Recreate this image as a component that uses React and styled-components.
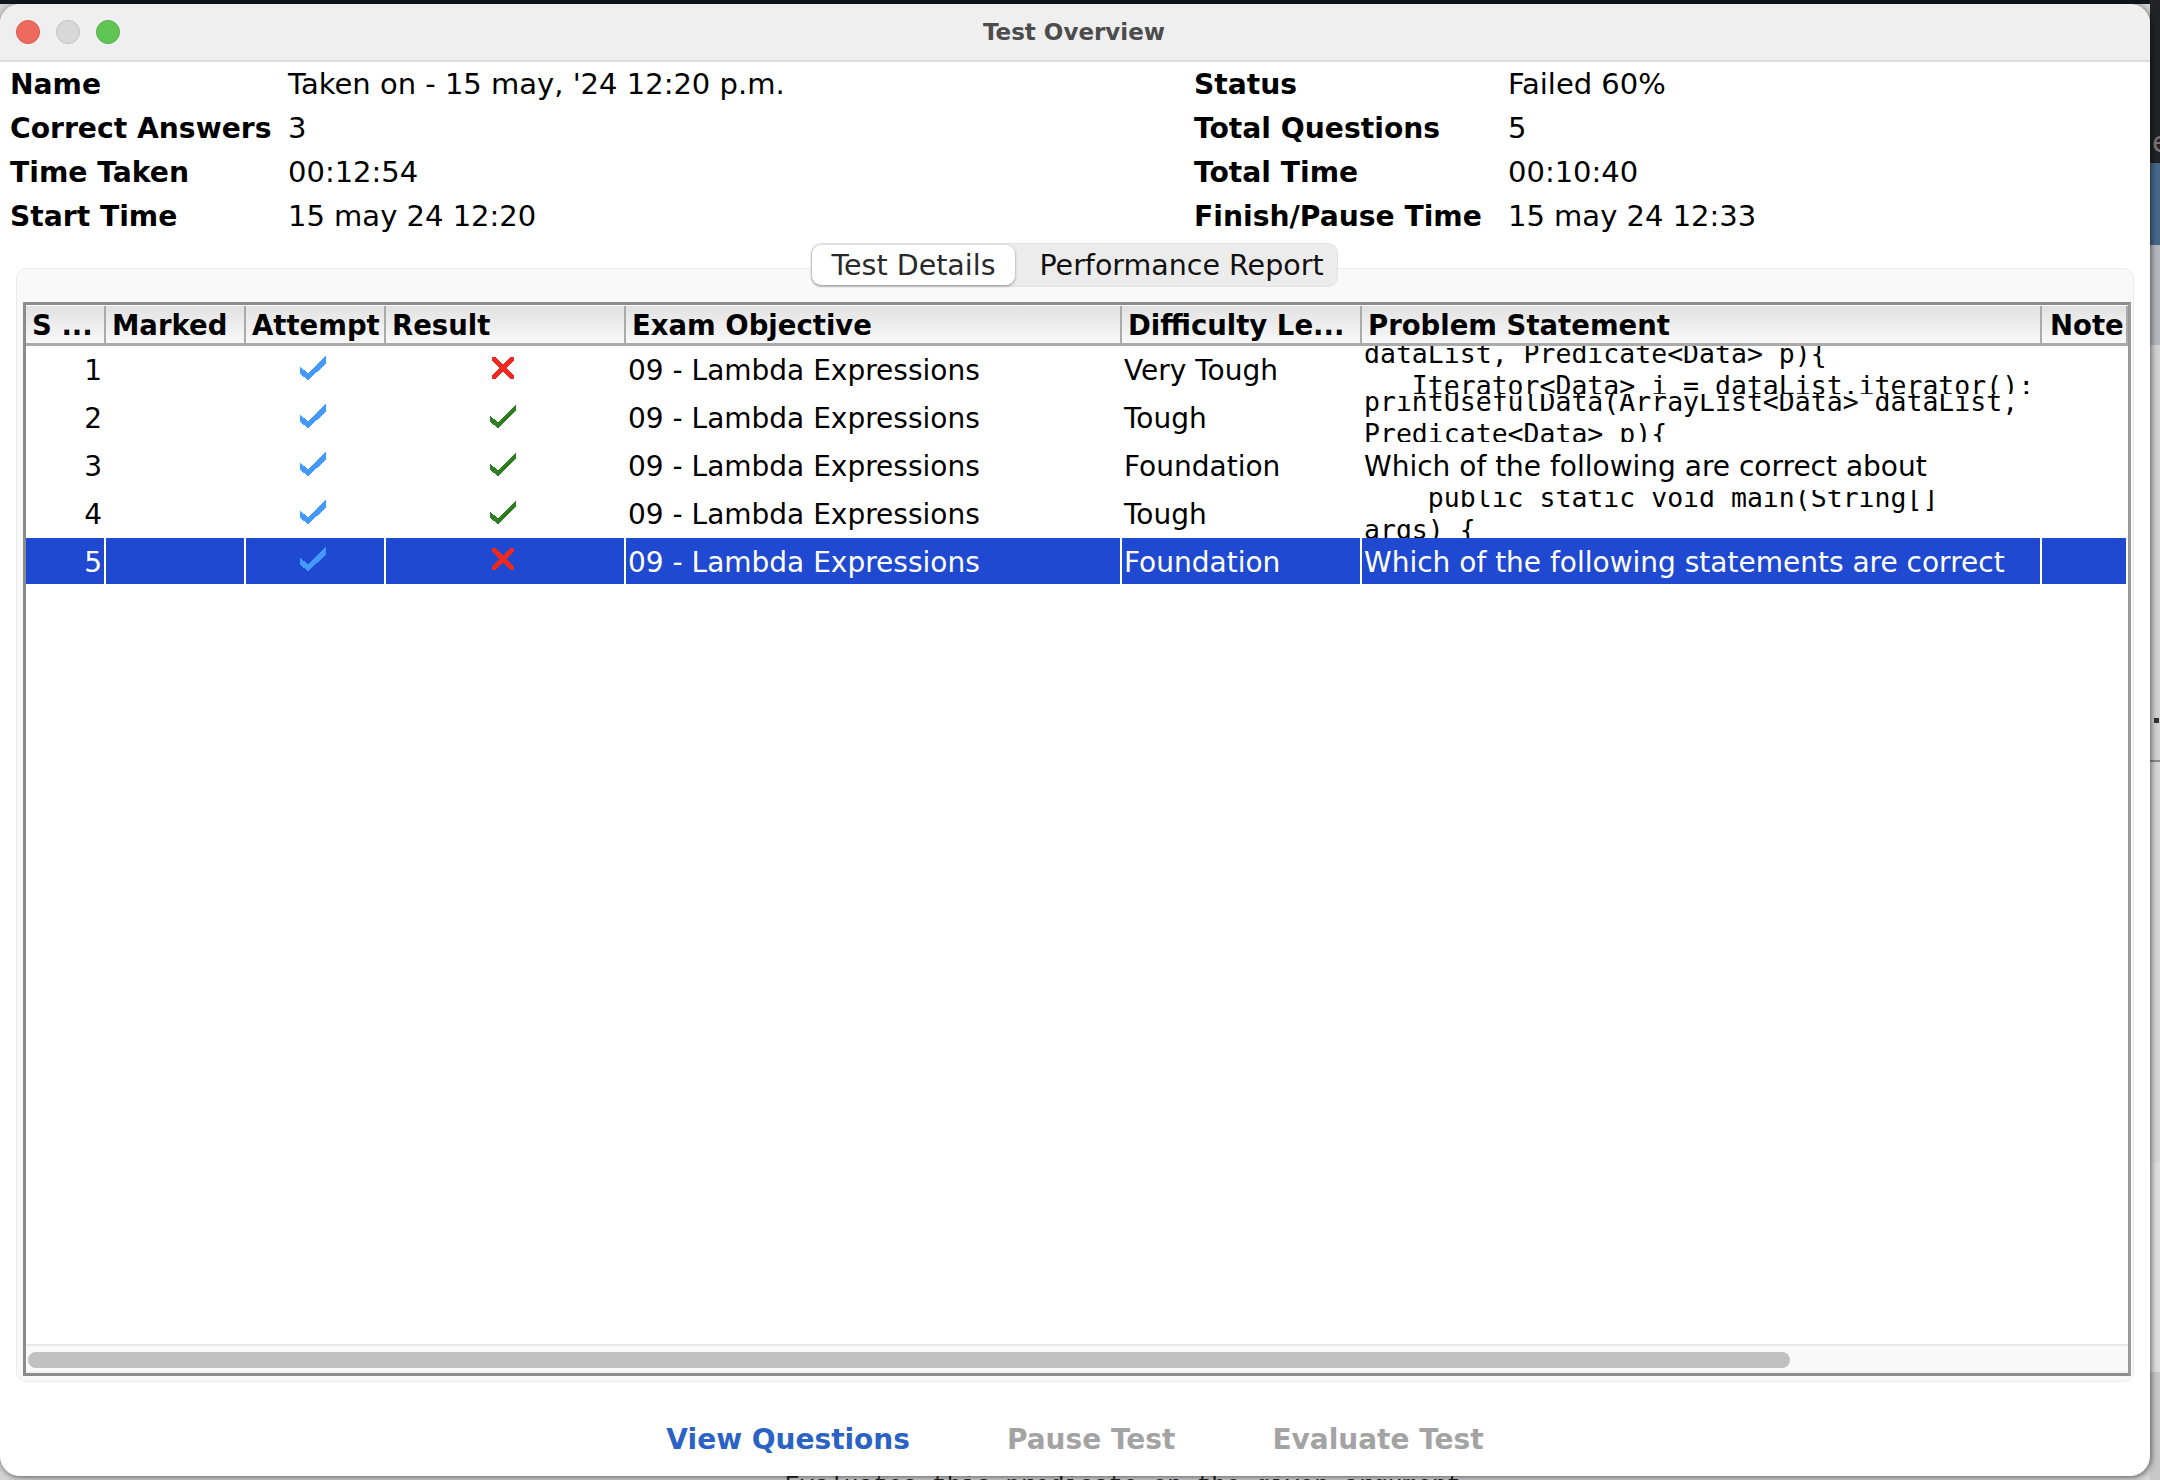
import React from 'react'
import styled, { createGlobalStyle } from 'styled-components'

const Global = createGlobalStyle`
  html, body { margin: 0; padding: 0; background: #d4d4d4; }
  * { box-sizing: border-box; }
`
const Desktop = styled.div`
  width: 2160px;
  height: 1480px;
  overflow: hidden;
  display: grid;
  grid-template-columns: 2150px 10px;
  background: #d4d4d4;
  font-family: "DejaVu Sans", sans-serif;
  color: #000;
`
const LeftSide = styled.div`
  display: flex;
  flex-direction: column;
  background: linear-gradient(#10181c 0, #10181c 4px, transparent 4px);
`
const RightStrip = styled.div`
  display: flex;
  flex-direction: column;
  background: #d2d2d2;
`
const Band = styled.div`
  height: ${p => p.$h}px;
  flex-shrink: 0;
  background: ${p => p.$c};
  overflow: hidden;
  display: flex;
  align-items: flex-end;
  padding-left: 2px;
  font-size: 28px;
  line-height: 40px;
  color: #777;
`
const Dot = styled.span`
  width: 5px;
  height: 5px;
  margin-left: 2px;
  background: #333;
`
const Window = styled.div`
  position: relative;
  z-index: 1;
  margin-top: 4px;
  height: 1472px;
  flex-shrink: 0;
  background: #fff;
  border-radius: 20px;
  box-shadow: 1px 1px 6px rgba(0, 0, 0, 0.6);
  display: flex;
  flex-direction: column;
  overflow: hidden;
`
const TitleBar = styled.div`
  height: 58px;
  flex-shrink: 0;
  background: #efefef;
  border-bottom: 2px solid #dedede;
  display: flex;
  align-items: center;
  position: relative;
  padding-left: 16px;
  gap: 16px;
`
const Light = styled.span`
  width: 24px;
  height: 24px;
  border-radius: 50%;
  background: ${p => p.$c};
  border: 1px solid ${p => p.$b};
`
const WindowTitle = styled.div`
  position: absolute;
  left: 0;
  right: 2px;
  text-align: center;
  font-size: 23px;
  font-weight: bold;
  color: #4c4c4c;
`
const Info = styled.div`
  display: grid;
  grid-template-columns: 278px 906px 314px 1fr;
  grid-auto-rows: 44px;
  padding-left: 10px;
  flex-shrink: 0;
  font-size: 29px;
`
const Label = styled.div`
  font-weight: bold;
  font-size: 28.2px;
  display: flex;
  align-items: center;
  white-space: nowrap;
`
const Value = styled.div`
  display: flex;
  align-items: center;
  white-space: nowrap;
`
const Panel = styled.div`
  margin: 30px 16px 0 16px;
  height: 1114px;
  flex-shrink: 0;
  background: #f9f9f9;
  border: 1px solid #ececec;
  border-radius: 10px;
  padding: 0 2px 5px 6px;
  display: flex;
  flex-direction: column;
`
const Tabs = styled.div`
  align-self: center;
  margin: -26px 0 0 -5px;
  height: 44px;
  width: 527px;
  flex-shrink: 0;
  display: flex;
  align-items: center;
  background: #ececec;
  border-radius: 10px;
  border: 1px solid #e2e2e2;
`
const Tab = styled.div`
  height: 40px;
  display: flex;
  align-items: center;
  justify-content: center;
  font-size: 28.5px;
  border-radius: 9px;
  width: ${p => p.$w}px;
  padding-left: ${p => p.$pad || 0}px;
  color: ${p => (p.$on ? '#2a2a2a' : '#111')};
  background: ${p => (p.$on ? '#fff' : 'transparent')};
  box-shadow: ${p => (p.$on ? '0 1px 3px rgba(0, 0, 0, 0.4)' : 'none')};
`
const Table = styled.div`
  margin-top: 15px;
  flex: 1;
  background: #fff;
  border: 3px solid #8c8c8c;
  border-right-color: #9c9c9c;
  display: flex;
  flex-direction: column;
  min-height: 0;
`
const columns = '80px 140px 140px 240px 496px 240px 680px 86px'
const HeadRow = styled.div`
  margin-top: 1px;
  height: 40px;
  flex-shrink: 0;
  display: grid;
  grid-template-columns: ${columns};
  background: linear-gradient(#e2e2e2, #f8f8f8);
  border-bottom: 3px solid #aaa;
`
const HeadCell = styled.div`
  font-weight: bold;
  font-size: 27.5px;
  padding-left: 6px;
  border-right: 2px solid #aaa;
  white-space: nowrap;
  overflow: hidden;
  display: flex;
  align-items: center;
  &:last-child { padding-left: 8px; }
`
const Body = styled.div`
  flex: 1;
  min-height: 0;
`
const Row = styled.div`
  height: 48px;
  display: grid;
  grid-template-columns: ${columns};
  padding-bottom: ${p => (p.$on ? 2 : 0)}px;
  font-size: 28px;
  color: ${p => (p.$on ? '#fff' : '#000')};
`
const Cell = styled.div`
  padding: ${p => (p.$on ? 2 : 0)}px 2px 0 2px;
  background: ${p => (p.$on ? '#2049d1' : 'transparent')};
  border-right: 2px solid #fff;
  display: flex;
  align-items: center;
  justify-content: ${p => p.$align || 'flex-start'};
  white-space: nowrap;
  overflow: hidden;
`
const IconCell = styled(Cell)`
  padding: 0 4px 4px 0;
  justify-content: center;
`
const ProblemCell = styled(Cell)`
  flex-direction: column;
  align-items: flex-start;
  justify-content: center;
  font-family: "DejaVu Sans Mono", monospace;
  font-size: 26.5px;
  line-height: 32px;
`
const CodeLine = styled.div`
  flex-shrink: 0;
  white-space: pre;
`
const ScrollTrack = styled.div`
  height: 29px;
  flex-shrink: 0;
  background: #f9f9f9;
  border-top: 2px solid #e8e8e8;
  border-bottom: 2px solid #f0f0f0;
  padding: 6px 0 0 2px;
`
const ScrollThumb = styled.div`
  width: 1762px;
  height: 16px;
  border-radius: 8px;
  background: #c1c1c1;
`
const Footer = styled.div`
  flex: 1;
  display: flex;
  align-items: center;
  justify-content: center;
  gap: 97px;
  font-size: 28px;
  font-weight: bold;
  padding-top: 21px;
`
const Action = styled.div`
  color: ${p => (p.$on ? '#2a63c4' : '#a3a3a3')};
`
const Peek = styled.div`
  height: 4px;
  overflow: hidden;
  padding-left: 785px;
  font-family: "Liberation Mono", monospace;
  font-size: 24.5px;
  line-height: 20px;
  color: #222;
  white-space: pre;
`

const Check = ({ color }) => (
  <svg width="26" height="24" viewBox="0 0 26 24" shapeRendering="crispEdges">
    <polygon points="0,11 8,17 26,0 26,8 8,24 0,18" fill={color} />
  </svg>
)
const ThinCheck = ({ color }) => (
  <svg width="26" height="24" viewBox="0 0 26 24" shapeRendering="crispEdges">
    <polygon points="0,12 8,18 26,0 26,7 8,24 0,18" fill={color} />
  </svg>
)
const Cross = () => (
  <svg width="22" height="22" viewBox="0 0 22 22" shapeRendering="crispEdges">
    <path d="M2 2 L20 20 M20 2 L2 20" stroke="#f0281e" strokeWidth="4.5" strokeLinecap="square" fill="none" />
  </svg>
)

const info = [
  ['Name', "Taken on - 15 may, '24 12:20 p.m.", 'Status', 'Failed 60%'],
  ['Correct Answers', '3', 'Total Questions', '5'],
  ['Time Taken', '00:12:54', 'Total Time', '00:10:40'],
  ['Start Time', '15 may 24 12:20', 'Finish/Pause Time', '15 may 24 12:33'],
]
const heads = ['S ...', 'Marked', 'Attempt', 'Result', 'Exam Objective', 'Difficulty Le...', 'Problem Statement', 'Note']
const rows = [
  { n: 1, ok: false, level: 'Very Tough', lines: ['dataList, Predicate<Data> p){', '   Iterator<Data> i = dataList.iterator();'] },
  { n: 2, ok: true, level: 'Tough', lines: ['printUsefulData(ArrayList<Data> dataList,', 'Predicate<Data> p){'] },
  { n: 3, ok: true, level: 'Foundation', text: 'Which of the following are correct about' },
  { n: 4, ok: true, level: 'Tough', lines: ['    public static void main(String[]', 'args) {'] },
  { n: 5, ok: false, level: 'Foundation', text: 'Which of the following statements are correct', on: true },
]

export default function App() {
  return (
    <Desktop>
      <Global />
      <LeftSide>
        <Window>
          <TitleBar>
            <Light $c="#ee6a5f" $b="#d9584e" />
            <Light $c="#d8d8d8" $b="#c2c2c2" />
            <Light $c="#61c554" $b="#52ad46" />
            <WindowTitle>Test Overview</WindowTitle>
          </TitleBar>
          <Info>
            {info.map(r => (
              <React.Fragment key={r[0]}>
                <Label>{r[0]}</Label>
                <Value>{r[1]}</Value>
                <Label>{r[2]}</Label>
                <Value>{r[3]}</Value>
              </React.Fragment>
            ))}
          </Info>
          <Panel>
            <Tabs>
              <Tab $on $w={203}>Test Details</Tab>
              <Tab $w={322} $pad={11}>Performance Report</Tab>
            </Tabs>
            <Table>
              <HeadRow>
                {heads.map(h => <HeadCell key={h}>{h}</HeadCell>)}
              </HeadRow>
              <Body>
                {rows.map(r => (
                  <Row key={r.n} $on={r.on}>
                    <Cell $on={r.on} $align="flex-end">{r.n}</Cell>
                    <Cell $on={r.on} />
                    <IconCell $on={r.on}><Check color="#4499ff" /></IconCell>
                    <IconCell $on={r.on}>{r.ok ? <ThinCheck color="#2e7d1e" /> : <Cross />}</IconCell>
                    <Cell $on={r.on}>09 - Lambda Expressions</Cell>
                    <Cell $on={r.on}>{r.level}</Cell>
                    {r.lines ? (
                      <ProblemCell $on={r.on}>
                        {r.lines.map((l, i) => <CodeLine key={i}>{l}</CodeLine>)}
                      </ProblemCell>
                    ) : (
                      <Cell $on={r.on}>{r.text}</Cell>
                    )}
                    <Cell $on={r.on} />
                  </Row>
                ))}
              </Body>
              <ScrollTrack><ScrollThumb /></ScrollTrack>
            </Table>
          </Panel>
          <Footer>
            <Action $on>View Questions</Action>
            <Action>Pause Test</Action>
            <Action>Evaluate Test</Action>
          </Footer>
        </Window>
        <Peek>Evaluates this predicate on the given argument</Peek>
      </LeftSide>
      <RightStrip>
        <Band $h={163} $c="#222324">e</Band>
        <Band $h={82} $c="#46688a" />
        <Band $h={100} $c="#b5b8be" />
        <Band $h={378} $c="#d2d2d2"><Dot /></Band>
        <Band $h={37} $c="#d2d2d2" />
        <Band $h={2} $c="#8a8a8a" />
        <Band $h={400} $c="#d6d6d6" />
        <Band $h={210} $c="#dedede" />
        <Band $h={108} $c="#c8c8c8" />
      </RightStrip>
    </Desktop>
  )
}
